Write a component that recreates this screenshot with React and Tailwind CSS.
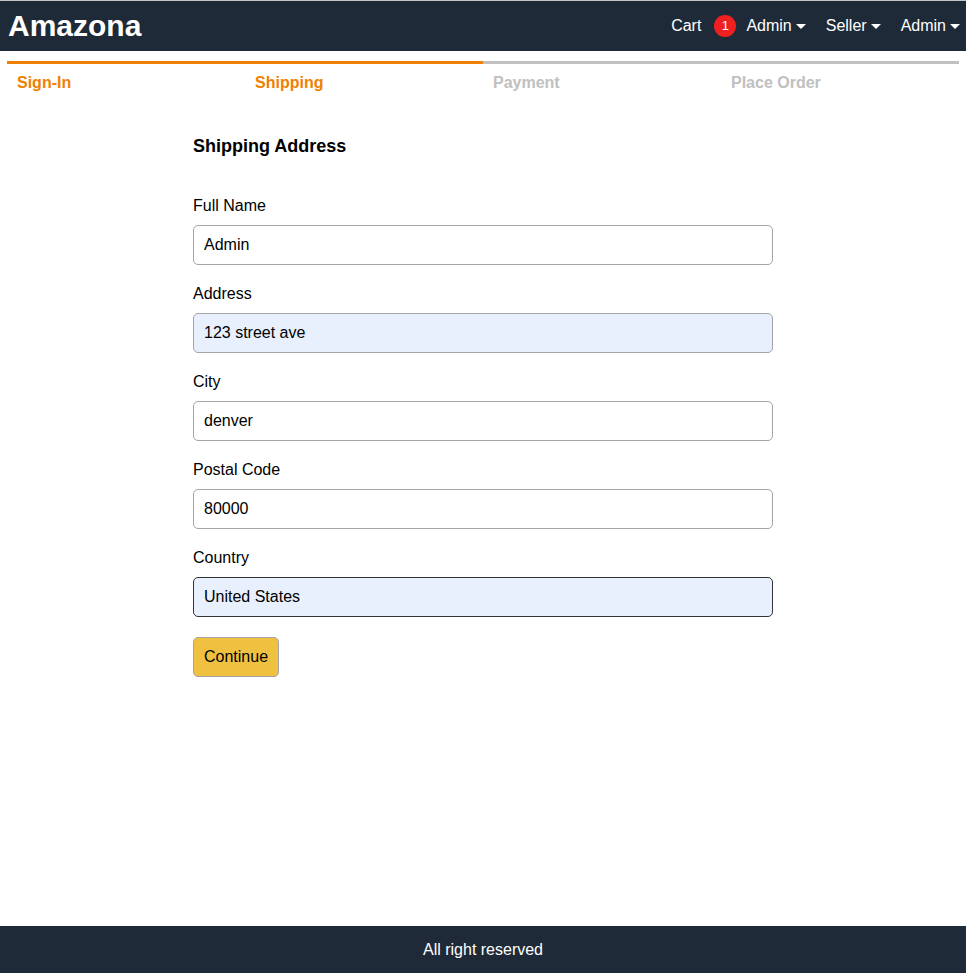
const font = { fontFamily: '"Liberation Sans", Arial, Helvetica, sans-serif' }

function Caret() {
  return <span className="ml-1 inline-block w-0 h-0 border-l-[5px] border-r-[5px] border-t-[5px] border-l-transparent border-r-transparent border-t-white align-middle" />
}

function Field({ label, value, filled, focus }) {
  return (
    <div className="flex flex-col">
      <label className="text-[16px] leading-[20px] mb-[9px]">{label}</label>
      <input
        readOnly
        value={value}
        className={`h-[40px] px-[10px] text-[16px] rounded-[5px] border outline-none ${
          filled ? 'bg-[#e8f0fe]' : 'bg-white'
        } ${focus ? 'border-[#333]' : 'border-[#a4a4a4]'}`}
      />
    </div>
  )
}

export default function App() {
  const steps = [
    { name: 'Sign-In', on: true },
    { name: 'Shipping', on: true },
    { name: 'Payment', on: false },
    { name: 'Place Order', on: false },
  ]
  return (
    <div style={font} className="min-h-[973px] flex flex-col text-black bg-white">
      <header className="h-[51px] border-t border-[#c6c6c6] bg-[#1f2a38] flex items-center justify-between pl-[8px] pr-[6px]">
        <a className="text-white font-bold text-[30px] leading-none">Amazona</a>
        <nav className="flex items-center text-white text-[16px]">
          <span className="mr-[13px]">Cart</span>
          <span className="w-[22px] h-[22px] rounded-full bg-[#f02020] text-[13px] text-white flex items-center justify-center mr-[10px]">1</span>
          <span className="mr-[20px]">Admin<Caret /></span>
          <span className="mr-[20px]">Seller<Caret /></span>
          <span>Admin<Caret /></span>
        </nav>
      </header>

      <main className="flex-1">
        <div className="flex mx-[7px] mt-[10px]">
          {steps.map((s) => (
            <div
              key={s.name}
              className={`flex-1 border-t-[3px] px-[10px] pt-[7px] font-bold text-[16px] ${
                s.on ? 'border-[#f08000] text-[#f08000]' : 'border-[#c0c0c0] text-[#c0c0c0]'
              }`}
            >
              {s.name}
            </div>
          ))}
        </div>

        <form className="w-[580px] mx-auto mt-[41px] flex flex-col gap-[19px]">
          <h1 className="text-[18px] font-bold leading-[20px] mb-[21px]">Shipping Address</h1>
          <Field label="Full Name" value="Admin" />
          <Field label="Address" value="123 street ave" filled />
          <Field label="City" value="denver" />
          <Field label="Postal Code" value="80000" />
          <Field label="Country" value="United States" filled focus />
          <div className="mt-[1px]">
            <button type="button" className="h-[40px] px-[10px] rounded-[5px] border border-[#a4a4a4] bg-[#f0c040] text-[16px]">
              Continue
            </button>
          </div>
        </form>
      </main>

      <footer className="h-[47px] bg-[#1f2a38] text-white text-[16px] flex items-center justify-center">
        All right reserved
      </footer>
    </div>
  )
}
